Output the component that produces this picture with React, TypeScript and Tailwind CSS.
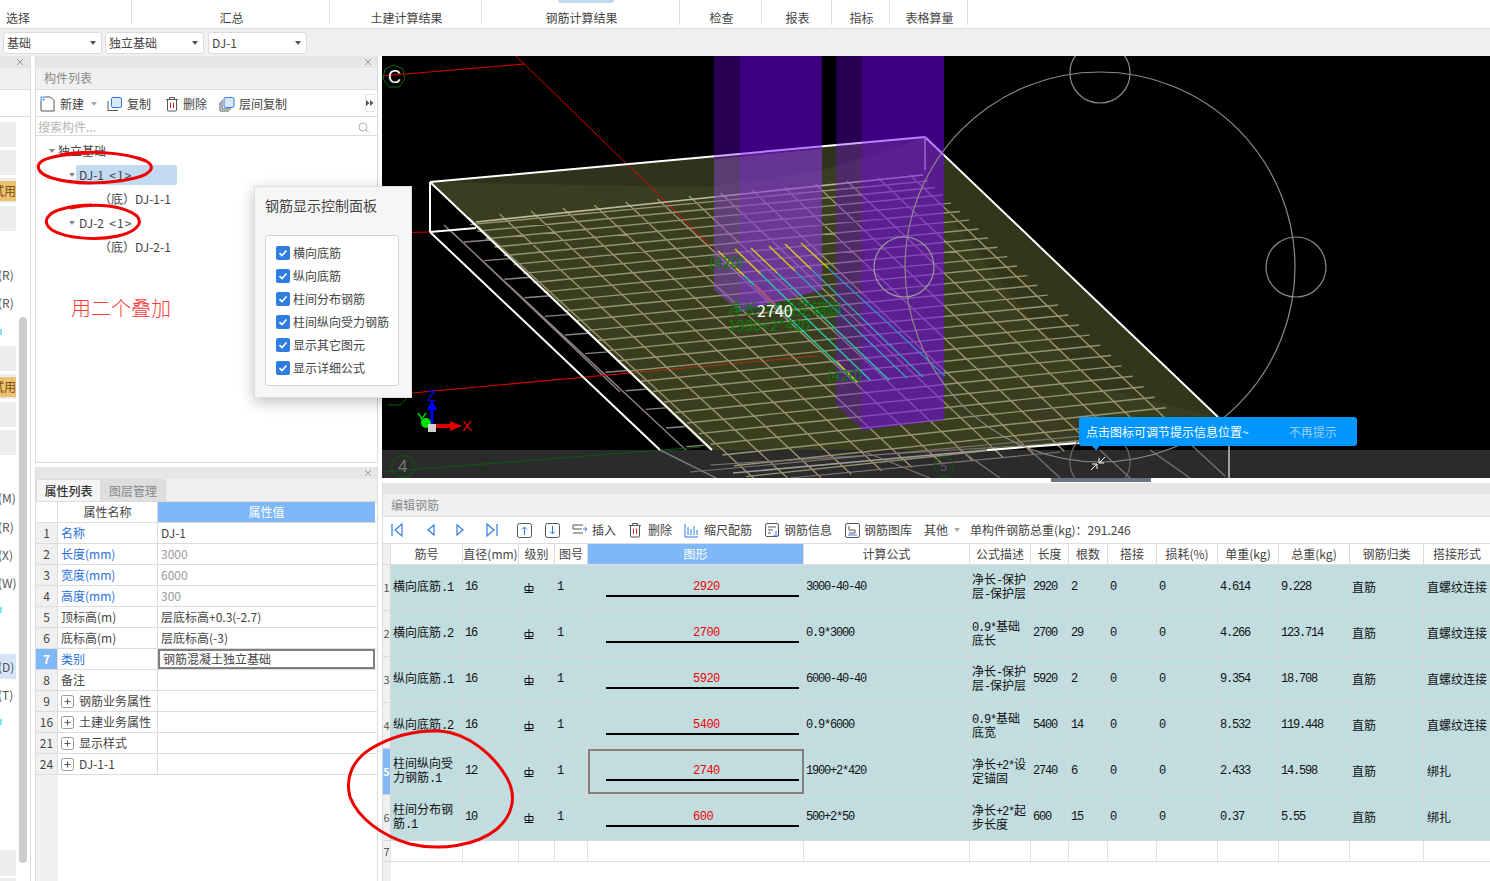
import React from "react";

const sans = "font-['Noto_Sans_CJK_SC','Noto_Sans',sans-serif]";

const ribbon = [
  { label: "选择", w: "w-[132px]", cls: "justify-start pl-[6px]" },
  { label: "汇总", w: "w-[198px]", cls: "justify-center pl-[2px]" },
  { label: "土建计算结果", w: "w-[152px]", cls: "justify-center pl-[2px]" },
  { label: "钢筋计算结果", w: "w-[198px]", cls: "justify-center pl-[2px]" },
  { label: "检查", w: "w-[82px]", cls: "justify-center pl-[2px]" },
  { label: "报表", w: "w-[70px]", cls: "justify-center pl-[2px]" },
  { label: "指标", w: "w-[58px]", cls: "justify-center pl-[2px]" },
  { label: "表格算量", w: "w-[78px]", cls: "justify-center pl-[2px]" },
];

const props = [
  { n: "1", name: "名称", value: "DJ-1", blue: true, dark: true },
  { n: "2", name: "长度(mm)", value: "3000", blue: true },
  { n: "3", name: "宽度(mm)", value: "6000", blue: true },
  { n: "4", name: "高度(mm)", value: "300", blue: true },
  { n: "5", name: "顶标高(m)", value: "层底标高+0.3(-2.7)", dark: true },
  { n: "6", name: "底标高(m)", value: "层底标高(-3)", dark: true },
  { n: "7", name: "类别", value: "钢筋混凝土独立基础", blue: true, dark: true, active: true },
  { n: "8", name: "备注", value: "" },
  { n: "9", name: "钢筋业务属性", value: "", tree: true },
  { n: "16", name: "土建业务属性", value: "", tree: true },
  { n: "21", name: "显示样式", value: "", tree: true },
  { n: "24", name: "DJ-1-1", value: "", tree: true },
];

const cols =
  "grid grid-cols-[8px_72px_56px_36px_33px_216px_166px_61px_38px_39px_49px_61px_61px_71px_74px_67px]";

const cell = "flex items-center pl-[2px] pb-[2px] border-r border-[#d8d8d8]";

const heads = ["", "筋号", "直径(mm)", "级别", "图号", "图形", "计算公式", "公式描述", "长度", "根数", "搭接", "损耗(%)", "单重(kg)", "总重(kg)", "钢筋归类", "搭接形式"];

const bars = [
  ["横向底筋.1", "16", "2920", "3000-40-40", "净长-保护层-保护层", "2920", "2", "4.614", "9.228", "直筋", "直螺纹连接"],
  ["横向底筋.2", "16", "2700", "0.9*3000", "0.9*基础底长", "2700", "29", "4.266", "123.714", "直筋", "直螺纹连接"],
  ["纵向底筋.1", "16", "5920", "6000-40-40", "净长-保护层-保护层", "5920", "2", "9.354", "18.708", "直筋", "直螺纹连接"],
  ["纵向底筋.2", "16", "5400", "0.9*6000", "0.9*基础底宽", "5400", "14", "8.532", "119.448", "直筋", "直螺纹连接"],
  ["柱间纵向受力钢筋.1", "12", "2740", "1900+2*420", "净长+2*设定锚固", "2740", "6", "2.433", "14.598", "直筋", "绑扎"],
  ["柱间分布钢筋.1", "10", "600", "500+2*50", "净长+2*起步长度", "600", "15", "0.37", "5.55", "直筋", "绑扎"],
];

const leftItems: { y: number; h: number; kind: string; text?: string }[] = [
  { y: 122, h: 25, kind: "box" },
  { y: 150, h: 25, kind: "box" },
  { y: 178, h: 25, kind: "try", text: "试用" },
  { y: 206, h: 25, kind: "box" },
  { y: 266, h: 18, kind: "text", text: "(R)" },
  { y: 294, h: 18, kind: "text", text: "(R)" },
  { y: 346, h: 25, kind: "box" },
  { y: 374, h: 25, kind: "try", text: "试用" },
  { y: 402, h: 25, kind: "box" },
  { y: 430, h: 25, kind: "box" },
  { y: 489, h: 18, kind: "text", text: "(M)" },
  { y: 518, h: 18, kind: "text", text: "(R)" },
  { y: 546, h: 18, kind: "text", text: "(X)" },
  { y: 574, h: 18, kind: "text", text: "(W)" },
  { y: 654, h: 25, kind: "sel", text: "(D)" },
  { y: 686, h: 18, kind: "text", text: "(T)" },
  { y: 850, h: 26, kind: "box" },
  { y: 878, h: 3, kind: "box" },
];

const checks = ["横向底筋", "纵向底筋", "柱间分布钢筋", "柱间纵向受力钢筋", "显示其它图元", "显示详细公式"];

// ascii runs of the rebar grid look like a 6px wide bitmap font
function Sim({ text }: { text: string }) {
  const parts = text.match(/[\x00-\x7f]+|[^\x00-\x7f]+/g) ?? [];
  return (
    <>
      {parts.map((p, i) =>
        /[\x00-\x7f]/.test(p[0]) ? (
          <span key={i} className="font-['Liberation_Mono',monospace] tracking-[-1.2px]">
            {p}
          </span>
        ) : (
          <span key={i}>{p}</span>
        )
      )}
    </>
  );
}

function Close() {
  return (
    <svg width="8" height="8" viewBox="0 0 8 8" className="stroke-[#9a9a9a]">
      <path d="M1 1l6 6M7 1L1 7" fill="none" strokeWidth="1" />
    </svg>
  );
}

function Caret({ className = "" }: { className?: string }) {
  return (
    <svg width="6" height="4" viewBox="0 0 6 4" className={className}>
      <path d="M0 0h6L3 4z" fill="currentColor" />
    </svg>
  );
}

function Combo({ text, cls }: { text: string; cls: string }) {
  return (
    <div className={`${cls} h-[22px] bg-white rounded-[3px] border border-[#dcdcdc] flex items-center justify-between pl-[3px] pr-[5px] pb-[1px] text-[12px] text-[#444]`}>
      <span>{text}</span>
      <Caret className="text-[#555]" />
    </div>
  );
}

function CopyIcon({ layered = false }: { layered?: boolean }) {
  return (
    <svg width="16" height="16" viewBox="0 0 16 16" fill="none" className="shrink-0">
      {layered && <path d="M1 6v9h9" stroke="#555" />}
      <path d={layered ? "M3 4v9h9" : "M1 5v9.5h10"} stroke="#555" />
      <rect x={layered ? "5" : "4.5"} y="1.5" width="10" height="10" rx="1.5" fill="#d9e9fb" stroke="#2f7de1" />
    </svg>
  );
}

function TrashIcon() {
  return (
    <svg width="14" height="16" viewBox="0 0 14 16" fill="none" className="shrink-0">
      <path d="M1 3.5h12M4.5 3.5V1.5h5v2M2.5 3.5v10.5a1 1 0 001 1h7a1 1 0 001-1V3.5" stroke="#555" />
      <path d="M5.5 6.5v5.5M8.5 6.5v5.5" stroke="#d92020" />
    </svg>
  );
}

function NewIcon() {
  return (
    <svg width="15" height="16" viewBox="0 0 15 16" fill="none" className="shrink-0">
      <path d="M5 1h5.5L14 4.5V15H1V5" stroke="#555" />
      <rect x="0.5" y="0.5" width="4" height="4" fill="#3b8df0" />
      <path d="M2.5 0.5v4M0.5 2.5h4" stroke="#cfe3fb" />
    </svg>
  );
}

function Nav({ d, cls }: { d: string; cls: string }) {
  return (
    <svg width="12" height="16" viewBox="0 0 12 16" fill="none" className={cls}>
      <path d={d} stroke="#2f7de1" strokeWidth="1.2" />
    </svg>
  );
}

function BoxArrow({ up, cls }: { up: boolean; cls: string }) {
  return (
    <svg width="15" height="15" viewBox="0 0 15 15" fill="none" className={cls}>
      <rect x="0.5" y="0.5" width="14" height="14" rx="2" stroke="#555" />
      <path d={up ? "M7.5 12V4M5 6.5l2.5-2.5L10 6.5" : "M7.5 3v8M5 8.5L7.5 11 10 8.5"} stroke="#2f7de1" />
    </svg>
  );
}

function Scene() {
  const lerp = (a: number[], b: number[], t: number) => [a[0] + (b[0] - a[0]) * t, a[1] + (b[1] - a[1]) * t];
  const A = [476, 224];
  const B = [918, 182];
  const C = [1178, 430];
  const D = [752, 476];
  const upper: string[] = [];
  for (let i = 0; i <= 26; i++) {
    const t = Math.pow(i / 26, 1.12);
    const p = lerp(A, D, t);
    const q = lerp(B, C, t);
    upper.push(`M${p[0] - 6} ${p[1] + 0.6}L${q[0] + 10} ${q[1] - 1}`);
  }
  for (let i = 0; i <= 14; i++) {
    const t = i / 14;
    const p = lerp(A, B, t);
    const q = lerp(D, C, t);
    upper.push(`M${p[0] - 8} ${p[1] - 7}L${q[0] + 8} ${q[1] + 8}`);
  }
  const lower: string[] = ["M444 225L716 478", "M452 232L620 392"];
  for (let i = 0; i < 15; i++) {
    const y = 242 + i * 18.6;
    const x = 470 + i * 20.2;
    lower.push(`M${x - 6} ${y}L${x + 46} ${y - 4}`);
  }
  const lowerBand = [
    "M690 472L1215 424", "M710 465L1180 436", "M790 478L1060 452",
    "M930 478L860 450", "M1000 478L960 450", "M1060 478L1030 450", "M1130 478L1100 450", "M1190 478L1150 450", "M1225 476L1175 430",
  ];
  const rebars = [
    { s: [718, 251], e: [857, 382], tail: "#2dc4a8" },
    { s: [735, 249], e: [870, 380], tail: "#2dc4a8" },
    { s: [751, 248], e: [889, 380], tail: "#2dc4a8" },
    { s: [769, 246], e: [907, 378], tail: "#3f96b6" },
    { s: [785, 244], e: [923, 377], tail: "#3f96b6" },
    { s: [801, 243], e: [945, 376], tail: "#3a86c6" },
  ];

  return (
    <svg width="1108" height="422" viewBox="382 56 1108 422" className="block bg-black">
      <path d={lower.join("")} stroke="#8d8380" strokeWidth="1.4" fill="none" />
      <polygon points="430,182 925,137 1229,430 733,473" fill="#3a3e21" />
      <polygon points="523,184 709,187 823,170 925,137 430,182" fill="#30331b" />
      <polygon points="925,137 1218,417 1100,388 1030,318 930,193" fill="#32361b" />
      <polygon points="1000,392 1060,408 1120,430 1040,440" fill="#393c20" />
      <rect x="382" y="450" width="1108" height="28" fill="#2b2b2b" />
      <path d="M382 76L525 64M516 56L712 247" stroke="#e00000" strokeWidth="1" fill="none" />
      <path d="M382 233L430 232M412 393L630 373" stroke="#e00000" strokeWidth="1.2" fill="none" />
      <path d="M630 373L817 356" stroke="#a83010" strokeWidth="1" fill="none" />
      <path d="M382 472L701 447" stroke="#0c5a0c" strokeWidth="1" fill="none" />
      <path d={upper.join("")} stroke="#98936f" strokeWidth="1.4" fill="none" />
      <path d={lowerBand.join("")} stroke="#7d7472" strokeWidth="1.2" fill="none" />
      <path d="M476 222L923 175" stroke="#b9b9a0" strokeWidth="1.6" fill="none" />
      <path d="M430 232L476 228" stroke="#fff" strokeWidth="2" fill="none" />
      <path d="M430 182L925 137M430 182L712 450M925 137L1218 417M430 182V232M430 232L660 450" stroke="#fff" strokeWidth="2" fill="none" />
      <path d="M925 137V170" stroke="#cfcfcf" strokeWidth="1.4" fill="none" />
      <path d="M660 450L716 478" stroke="#777" strokeWidth="1.4" fill="none" />
      <path d="M733 473L987 450" stroke="#9a9a9a" strokeWidth="1.6" fill="none" />
      <path d="M987 450L1080 443" stroke="#fff" strokeWidth="2" fill="none" />
      <path d="M1219 417L1229 428V478" stroke="#bdbdbd" strokeWidth="1.6" fill="none" />
      <path d="M1080 443L1229 430" stroke="#8d8380" strokeWidth="1.4" fill="none" />

      <polygon points="714,56 740,56 740,312 714,290" fill="#7a00ff" opacity="0.32" />
      <polygon points="740,56 822,56 822,290 740,312" fill="#7a00ff" opacity="0.5" />
      <polygon points="714,159 822,149 822,290 740,312 714,290" fill="#a8a0a8" opacity="0.2" />
      <polygon points="836,56 862,56 862,430 836,405" fill="#7a00ff" opacity="0.32" />
      <polygon points="862,56 944,56 944,420 862,430" fill="#7a00ff" opacity="0.5" />

      {rebars.map((r, i) => {
        const mid = lerp(r.s, r.e, 0.19);
        return (
          <g key={i} fill="none" strokeWidth="1.5">
            <path d={`M${r.s[0]} ${r.s[1]}L${mid[0]} ${mid[1]}`} stroke="#d0c81a" />
            <path d={`M${mid[0]} ${mid[1]}L${r.e[0]} ${r.e[1]}`} stroke={r.tail} />
          </g>
        );
      })}
      <path d="M837 362L857 382" stroke="#d0c81a" strokeWidth="1.5" fill="none" />
      <path d="M755 285L775 305" stroke="#a8507c" strokeWidth="3" fill="none" />

      <circle cx="1100" cy="267" r="195" fill="none" stroke="#8a8a8a" strokeWidth="1.2" />
      <circle cx="1100" cy="73" r="30" fill="none" stroke="#8a8a8a" strokeWidth="1.2" />
      <circle cx="1296" cy="267" r="30" fill="none" stroke="#8a8a8a" strokeWidth="1.2" />
      <circle cx="904" cy="267" r="30" fill="none" stroke="#9a9a9a" strokeWidth="1.2" />
      <circle cx="1100" cy="462" r="30" fill="none" stroke="#6a6a6a" strokeWidth="1.2" />

      <g fontFamily="'Noto Sans CJK SC', sans-serif" fill="#0b7a0b">
        <text x="709" y="268" fontSize="15">(420)</text>
        <text x="827" y="381" fontSize="15">(420)</text>
        <text x="728" y="314" fontSize="15">净长+2*设定锚固</text>
        <text x="728" y="331" fontSize="15">1900+2*420</text>
        <text x="757" y="317" fontSize="16" fill="#fff">2740</text>
      </g>

      <polygon points="394,65 403,69 405,79 399,87 389,87 383,79 385,69" fill="none" stroke="#0c6a0c" />
      <text x="388" y="83" fontSize="18" fill="#fff" fontFamily="'Liberation Sans', sans-serif">C</text>
      <polygon points="403,455 412,459 415,469 409,477 397,477 391,469 394,459" fill="none" stroke="#0c5a0c" />
      <text x="398" y="472" fontSize="17" fill="#777" fontFamily="'Liberation Sans', sans-serif">4</text>
      <polygon points="944,456 952,460 954,468 949,476 939,476 934,468 936,460" fill="none" stroke="#0c5a0c" />
      <text x="940" y="471" fontSize="13" fill="#555" fontFamily="'Liberation Sans', sans-serif">5</text>
      <path d="M412 393L400 405H388" stroke="#0c6a0c" fill="none" />

      <path d="M432 427V408" stroke="#0000ff" strokeWidth="3" />
      <polygon points="432,400 427,410 437,410" fill="#0000ff" />
      <path d="M432 426H452" stroke="#e00000" strokeWidth="4" />
      <polygon points="462,426 450,421 450,431" fill="#e00000" />
      <circle cx="426" cy="423" r="5" fill="#00e000" />
      <rect x="428" y="424" width="8" height="8" fill="#cfcfcf" />
      <g fontFamily="'Liberation Sans', sans-serif" fontSize="15">
        <text x="427" y="401" fill="#0000ff">Z</text>
        <text x="417" y="423" fill="#00e000">Y</text>
        <text x="462" y="431" fill="#e00000">X</text>
      </g>

      <path d="M1096 451l-3-6h7z" fill="#0096ff" />
      <path d="M1105 457l-6 6M1099 458v5h5M1091 470l6-6M1097 469v-5h-5" stroke="#fff" fill="none" />
    </svg>
  );
}

function Marks() {
  return (
    <svg width="1490" height="881" viewBox="0 0 1490 881" fill="none" stroke="#f00000" className="absolute inset-0 pointer-events-none">
      <path strokeWidth="3" d="M60 155C85 150 125 152 146 161C156 166 152 174 135 178C110 184 75 185 52 178C36 173 36 165 42 161C48 157 70 153 90 153" />
      <path strokeWidth="3" d="M70 208C95 202 125 206 137 216C144 224 135 232 118 236C95 241 65 238 52 230C41 222 47 213 62 209C72 206 85 205 92 205" />
      <path strokeWidth="3" d="M440 731C468 733 494 755 507 778C517 796 513 815 497 829C476 846 440 851 410 844C382 836 358 818 350 797C345 778 352 760 372 748C392 736 414 730 440 731" />
    </svg>
  );
}

export default function App() {
  return (
    <div className={`${sans} relative w-[1490px] h-[881px] overflow-hidden bg-white text-[12px] leading-none text-[#444]`}>
      {/* ribbon labels */}
      <div className="relative flex h-[29px] border-b border-[#dedede]">
        <div className="absolute left-[558px] top-0 w-[56px] h-[3px] rounded-b-[3px] bg-[#c2d9f2]" />
        {ribbon.map((r) => (
          <div key={r.label} className={`${r.w} ${r.cls} h-[25px] pt-[12px] flex border-r border-[#dedede]`}>
            {r.label}
          </div>
        ))}
      </div>
      <div className="flex h-[27px] gap-[3px] pl-[3px] pt-[3px] bg-[#f0f0f0]">
        <Combo text="基础" cls="w-[99px]" />
        <Combo text="独立基础" cls="w-[99px]" />
        <Combo text="DJ-1" cls="w-[99px] ml-px" />
      </div>

      <div className="flex h-[825px]">
        {/* far left, cut off */}
        <div className="relative w-[31px] border-r border-[#dcdcdc] overflow-hidden shrink-0">
          <div className="flex justify-end h-3 bg-[#e6e6e6] pr-[6px] items-center"><Close /></div>
          <div className="h-[22px] bg-[#f0f0f0] border-b border-[#dcdcdc]" />
          <div className="h-[27px] border-b border-[#dcdcdc]" />
          {leftItems.map((it) => (
            <div
              key={it.y}
              style={{ top: it.y - 56, height: it.h }}
              className={`absolute left-0 w-4 flex items-center overflow-hidden whitespace-nowrap text-[#555] ${
                it.kind === "box" || it.kind === "try" ? "bg-[#ececec] justify-end" : it.kind === "sel" ? "bg-[#d5e6f8] justify-start" : "justify-start"
              }`}
            >
              {it.kind === "try" ? (
                <span className="flex items-center h-[20px] bg-[#ecc270] text-[#7a4a10]">{it.text}</span>
              ) : (
                <span className="ml-[-2px]">{it.text}</span>
              )}
            </div>
          ))}
          <div className="absolute left-[19px] top-[261px] w-2 h-[546px] rounded-full bg-[#cdcdcd]" />
          <div className="absolute left-0 top-[273px] w-[2px] h-[6px] bg-[#7fe3f5]" />
          <div className="absolute left-0 top-[551px] w-[2px] h-[6px] bg-[#7fe3f5]" />
          <div className="absolute left-0 top-[663px] w-[2px] h-[6px] bg-[#7fe3f5]" />
        </div>

        <div className="w-[4px] shrink-0" />

        {/* middle column */}
        <div className="w-[343px] shrink-0 flex flex-col">
          <div className="h-[407px] border-x border-b border-[#dcdcdc] flex flex-col">
            <div className="flex justify-end items-center h-3 bg-[#e6e6e6] pr-[5px] shrink-0"><Close /></div>
            <div className="h-[22px] shrink-0 bg-[#f0f0f0] flex items-center pl-2 pb-[2px] text-[#8a8a8a] border-b border-[#dcdcdc]">构件列表</div>
            <div className="relative h-[27px] shrink-0 flex items-center pl-1 pt-[2px] border-b border-[#dcdcdc]">
              <NewIcon />
              <span className="ml-[5px]">新建</span>
              <Caret className="ml-[7px] text-[#aaa]" />
              <div className="ml-[10px]"><CopyIcon /></div>
              <span className="ml-[4px]">复制</span>
              <div className="ml-[14px]"><TrashIcon /></div>
              <span className="ml-[4px]">删除</span>
              <div className="ml-[12px]"><CopyIcon layered /></div>
              <span className="ml-[4px]">层间复制</span>
              <div className="absolute right-[2px] top-[4px] w-[10px] h-[18px] rounded-[2px] border border-[#e5e5e5] flex items-center justify-center">
                <svg width="8" height="6" viewBox="0 0 8 6"><path d="M0 0l3.5 3L0 6zM4 0l3.5 3L4 6z" fill="#555" /></svg>
              </div>
            </div>
            <div className="h-[19px] shrink-0 flex items-center justify-between pl-[2px] pr-2 pt-[2px] text-[#b5b5b5] border-b border-[#dcdcdc]">
              <span>搜索构件...</span>
              <svg width="11" height="11" viewBox="0 0 11 11" fill="none" stroke="#b0b0b0">
                <circle cx="5" cy="5" r="4" />
                <path d="M8 8l2.5 2.5" />
              </svg>
            </div>
            <div className="flex flex-col pt-[3px]">
              <div className="h-6 flex items-center pl-[13px]">
                <Caret className="text-[#888] mr-[3px]" />
                <span>独立基础</span>
              </div>
              <div className="h-6 flex items-center pl-[33px]">
                <Caret className="text-[#888]" />
                <span className="flex items-center w-[101px] h-[20px] ml-px pl-[3px] rounded-[2px] bg-[#c2d9f2] whitespace-pre">DJ-1  <span className="tracking-[1px]">&lt;1&gt;</span></span>
              </div>
              <div className="h-6 flex items-center pl-[63px]">（底）DJ-1-1</div>
              <div className="h-6 flex items-center pl-[33px]">
                <Caret className="text-[#888]" />
                <span className="ml-px pl-[3px] whitespace-pre">DJ-2  <span className="tracking-[1px]">&lt;1&gt;</span></span>
              </div>
              <div className="h-6 flex items-center pl-[63px]">（底）DJ-2-1</div>
              <div className="mt-[39px] pl-[35px] text-[20px] text-[#ff3a3a] font-light">用二个叠加</div>
            </div>
          </div>

          <div className="h-[4px] shrink-0" />

          <div className="flex-1 border-x border-[#dcdcdc] flex flex-col">
            <div className="flex justify-end items-center h-3 bg-[#e6e6e6] pr-[5px] shrink-0"><Close /></div>
            <div className="h-[23px] shrink-0 flex bg-[#f0f0f0] border-b border-[#dcdcdc]">
              <div className="w-[65px] flex items-center justify-center font-medium text-[#333] border-x border-t border-[#dcdcdc] bg-[#f5f5f5]">属性列表</div>
              <div className="w-[65px] flex items-center justify-center text-[#888] border-r border-t border-[#dcdcdc] bg-[#dedede]">图层管理</div>
            </div>
            <div className="grid grid-cols-[22px_100px_217px] h-[21px] shrink-0 border-b border-[#dcdcdc]">
              <div className="border-r border-[#dcdcdc]" />
              <div className="flex items-center justify-center border-r border-[#dcdcdc]">属性名称</div>
              <div className="flex items-center justify-center bg-[#7eb8f7] text-white">属性值</div>
            </div>
            {props.map((p) => (
              <div key={p.n} className="grid grid-cols-[22px_100px_217px] h-[21px] shrink-0 border-b border-[#dcdcdc]">
                <div className={`flex items-center justify-center border-r border-[#dcdcdc] ${p.active ? "bg-[#7eb8f7] text-white font-bold" : "bg-[#f0f0f0]"}`}>{p.n}</div>
                <div className={`flex items-center pl-[3px] border-r border-[#dcdcdc] ${p.blue ? "text-[#2a6fdb]" : ""}`}>
                  {p.tree && (
                    <svg width="13" height="13" viewBox="0 0 13 13" fill="none" className="mr-[5px]">
                      <rect x="0.5" y="0.5" width="12" height="12" rx="2" stroke="#999" />
                      <path d="M3.5 6.5h6M6.5 3.5v6" stroke="#555" />
                    </svg>
                  )}
                  {p.name}
                </div>
                <div className={`flex items-center pl-[3px] ${p.active ? "border-2 border-[#808080]" : ""} ${p.dark ? "" : "text-[#999]"}`}>{p.value}</div>
              </div>
            ))}
            <div className="flex-1 flex">
              <div className="w-[22px] bg-[#f0f0f0]" />
            </div>
          </div>
        </div>

        <div className="w-[4px] shrink-0" />

        {/* right */}
        <div className="flex-1 min-w-0 flex flex-col">
          <div className="relative">
            <Scene />
            <div className="absolute left-[697px] top-[361px] w-[278px] h-[29px] rounded-[3px] bg-[#0096ff] flex items-center pl-[7px] text-white">
              <span>点击图标可调节提示信息位置~</span>
              <span className="ml-[40px] text-[#9ccdf5]">不再提示</span>
            </div>
          </div>
          <div className="h-[5px] shrink-0">
            <div className="w-[100px] h-[4px] ml-[669px] bg-[#6b7480]" />
          </div>
          <div className="h-[11px] shrink-0 bg-[#e6e6e6] border-l border-[#dcdcdc]" />
          <div className="h-[23px] shrink-0 bg-[#f0f0f0] flex items-center pl-2 text-[#8a8a8a] border-l border-b border-[#dcdcdc]">编辑钢筋</div>
          <div className="h-[27px] shrink-0 flex items-center pl-2 border-l border-b border-[#dcdcdc]">
            <Nav d="M1 2v12M11 2L4 8l7 6z" cls="" />
            <Nav d="M10 3L4 8l6 5z" cls="ml-[21px]" />
            <Nav d="M2 3l6 5-6 5z" cls="ml-[19px]" />
            <Nav d="M1 2l7 6-7 6zM11 2v12" cls="ml-[19px]" />
            <BoxArrow up cls="ml-[19px]" />
            <BoxArrow up={false} cls="ml-[13px]" />
            <svg width="16" height="14" viewBox="0 0 16 14" fill="none" className="ml-[12px]">
              <path d="M11 2H1v4h9M1 10h10" stroke="#555" />
              <path d="M11 6h4M13 4l2 2-2 2" stroke="#2f7de1" />
            </svg>
            <span className="ml-[4px]">插入</span>
            <div className="ml-[12px]"><TrashIcon /></div>
            <span className="ml-[6px]">删除</span>
            <svg width="15" height="15" viewBox="0 0 15 15" fill="none" className="ml-[12px]">
              <path d="M1 1v13h13M4 4v8M7 6v6M10 3v9M13 7v5" stroke="#2f7de1" />
            </svg>
            <span className="ml-[5px]">缩尺配筋</span>
            <svg width="15" height="15" viewBox="0 0 15 15" fill="none" className="ml-[13px]">
              <rect x="0.5" y="0.5" width="13" height="13" rx="1.5" stroke="#555" />
              <path d="M3 4h8M3 7h5M3 10h3" stroke="#555" />
              <path d="M11 8v6M8.5 11.5L11 14l2.5-2.5" stroke="#2f7de1" />
            </svg>
            <span className="ml-[4px]">钢筋信息</span>
            <svg width="15" height="15" viewBox="0 0 15 15" fill="none" className="ml-[13px]">
              <rect x="0.5" y="0.5" width="14" height="14" rx="1.5" stroke="#555" />
              <path d="M4 3v4h6v3H4" stroke="#555" />
              <path d="M3 12h9" stroke="#2f7de1" />
            </svg>
            <span className="ml-[4px]">钢筋图库</span>
            <span className="ml-[12px]">其他</span>
            <Caret className="ml-[6px] text-[#aaa]" />
            <span className="ml-[10px]">单构件钢筋总重(kg)：291.246</span>
          </div>

          {/* rebar grid */}
          <div className="flex-1 border-l border-[#dcdcdc] overflow-hidden">
            <div className={`${cols} h-[21px] border-b border-[#dcdcdc]`}>
              {heads.map((h, i) => (
                <div
                  key={i}
                  className={`flex items-center justify-center whitespace-nowrap border-r border-[#dcdcdc] ${
                    i === 0 ? "bg-[#f0f0f0]" : i === 5 ? "bg-[#7eb8f7] text-white" : ""
                  }`}
                >
                  {h}
                </div>
              ))}
            </div>
            {bars.map((b, i) => (
              <div key={i} className={`${cols} h-[46px] bg-[#c1dde0] border-b border-[#d8d8d8] text-[#111]`}>
                <div className={`flex items-center justify-center border-r border-[#d8d8d8] text-[11px] ${i === 4 ? "bg-[#7eb8f7] text-white font-bold" : "bg-[#f0f0f0] text-[#555]"}`}>{i + 1}</div>
                <div className={`${cell} leading-[14px]`}><div><Sim text={b[0]} /></div></div>
                <div className={cell}><Sim text={b[1]} /></div>
                <div className="flex items-center pl-[5px] border-r border-[#d8d8d8]">
                  <svg width="10" height="10" viewBox="0 0 10 10" fill="none" stroke="#111">
                    <path d="M1 3.5h8v4H1zM5 0v10M0.5 9.5h9" />
                  </svg>
                </div>
                <div className={cell}><Sim text="1" /></div>
                <div className={`flex flex-col pt-[16px] pl-[18px] pr-[4px] border-r border-[#d8d8d8] ${i === 4 ? "outline-2 -outline-offset-2 outline-[#808080]" : ""}`}>
                  <span className="pl-[87px] h-[12px] text-[12px] leading-[12px] text-[#f00000] font-['Liberation_Mono',monospace] tracking-[-0.5px]">{b[2]}</span>
                  <div className="mt-[2px] h-[2px] bg-black" />
                </div>
                <div className={cell}><Sim text={b[3]} /></div>
                <div className={`${cell} leading-[12px]`}><div><Sim text={b[4]} /></div></div>
                <div className={cell}><Sim text={b[5]} /></div>
                <div className={cell}><Sim text={b[6]} /></div>
                <div className={cell}><Sim text="0" /></div>
                <div className={cell}><Sim text="0" /></div>
                <div className={cell}><Sim text={b[7]} /></div>
                <div className={cell}><Sim text={b[8]} /></div>
                <div className={cell}>{b[9]}</div>
                <div className="flex items-center pl-[3px] pb-[2px] whitespace-nowrap">{b[10]}</div>
              </div>
            ))}
            <div className={`${cols} h-[21px] border-b border-[#dcdcdc]`}>
              {heads.map((h, i) => (
                <div key={h + i} className={`flex items-center justify-center border-r border-[#e2e2e2] text-[11px] text-[#555] ${i === 0 ? "bg-[#f0f0f0]" : ""}`}>
                  {i === 0 ? "7" : ""}
                </div>
              ))}
            </div>
            <div className="w-2 h-[20px] bg-[#f0f0f0]" />
          </div>
        </div>
      </div>

      {/* floating control panel */}
      <div className="absolute left-[254px] top-[186px] w-[158px] h-[212px] bg-[#f6f6f6] border border-[#dcdcdc] shadow-[0_4px_14px_rgba(0,0,0,0.25)] px-[10px]">
        <div className="h-[48px] pt-[11px] text-[14px] leading-[14px] text-[#444]">钢筋显示控制面板</div>
        <div className="w-[134px] h-[151px] bg-white rounded-[3px] border border-[#d2d2d2] pt-[5px] pl-[10px]">
          {checks.map((c) => (
            <div key={c} className="flex items-center h-[23px] whitespace-nowrap">
              <span className="flex items-center justify-center w-[14px] h-[14px] rounded-[2px] bg-[#2f7de1]">
                <svg width="10" height="10" viewBox="0 0 10 10" fill="none" stroke="#fff" strokeWidth="1.6">
                  <path d="M1.5 5.2L4 7.6 8.5 2.5" />
                </svg>
              </span>
              <span className="ml-[3px]">{c}</span>
            </div>
          ))}
        </div>
      </div>

      <Marks />
    </div>
  );
}
